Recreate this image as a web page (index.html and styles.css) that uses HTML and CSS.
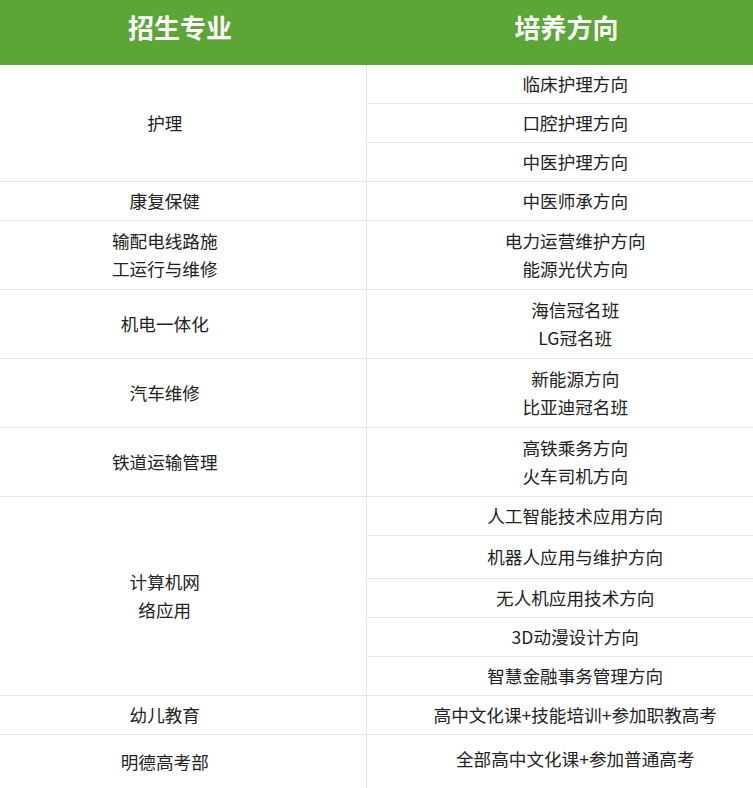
FILE: index.html
```html
<!DOCTYPE html>
<html lang="zh">
<head>
<meta charset="utf-8">
<title>招生专业</title>
<link rel="stylesheet" href="styles.css">
</head>
<body>
<table class="grid">
  <thead>
    <tr>
      <th class="hl">招生专业</th>
      <th class="hr">培养方向</th>
    </tr>
  </thead>
  <tbody>
    <tr><td class="major" rowspan="3">护理</td><td class="dir">临床护理方向</td></tr>
    <tr><td class="dir">口腔护理方向</td></tr>
    <tr><td class="dir">中医护理方向</td></tr>
    <tr><td class="major">康复保健</td><td class="dir">中医师承方向</td></tr>
    <tr class="two"><td class="major">输配电线路施<br>工运行与维修</td><td class="dir">电力运营维护方向<br>能源光伏方向</td></tr>
    <tr class="two"><td class="major">机电一体化</td><td class="dir">海信冠名班<br>LG冠名班</td></tr>
    <tr class="two"><td class="major">汽车维修</td><td class="dir">新能源方向<br>比亚迪冠名班</td></tr>
    <tr class="two"><td class="major">铁道运输管理</td><td class="dir">高铁乘务方向<br>火车司机方向</td></tr>
    <tr><td class="major" rowspan="5">计算机网<br>络应用</td><td class="dir">人工智能技术应用方向</td></tr>
    <tr class="tall"><td class="dir">机器人应用与维护方向</td></tr>
    <tr><td class="dir">无人机应用技术方向</td></tr>
    <tr><td class="dir">3D动漫设计方向</td></tr>
    <tr><td class="dir">智慧金融事务管理方向</td></tr>
    <tr><td class="major">幼儿教育</td><td class="dir">高中文化课+技能培训+参加职教高考</td></tr>
    <tr class="last"><td class="major">明德高考部</td><td class="dir">全部高中文化课+参加普通高考</td></tr>
  </tbody>
</table>
</body>
</html>
```

FILE: styles.css
```css
html, body {
  margin: 0;
  padding: 0;
  background: #ffffff;
}

body {
  font-family: "Noto Sans CJK SC", "Noto Sans", sans-serif;
  color: #222222;
}

.grid {
  width: 753px;
  border-collapse: collapse;
  table-layout: fixed;
}

.grid th {
  background: #5ba636;
  color: #ffffff;
  font-size: 26px;
  font-weight: 700;
  height: 54px;
  padding: 0 0 11px 0;
  line-height: 54px;
  text-align: center;
  border: none;
}

.grid th.hl {
  width: 360px;
  padding-right: 6px;
}

.grid th.hr {
  padding-left: 14px;
}

.grid td {
  font-size: 17.6px;
  line-height: 28px;
  padding: 5px 0;
  text-align: center;
  vertical-align: middle;
  border-bottom: 1px solid #e6e6e6;
}

.grid td.major {
  padding-right: 36px;
  border-right: 1px solid #e6e6e6;
}

.grid td.dir {
  padding-left: 31px;
}

.grid tr.two td {
  padding-top: 6px;
  padding-bottom: 6px;
}

.grid tr.tall td {
  padding-top: 7px;
  padding-bottom: 7px;
}

.grid tr.last td {
  padding-top: 10px;
  padding-bottom: 16px;
  border-bottom: none;
}

.grid tr.last td.major {
  padding-top: 13px;
  padding-bottom: 13px;
}
```
